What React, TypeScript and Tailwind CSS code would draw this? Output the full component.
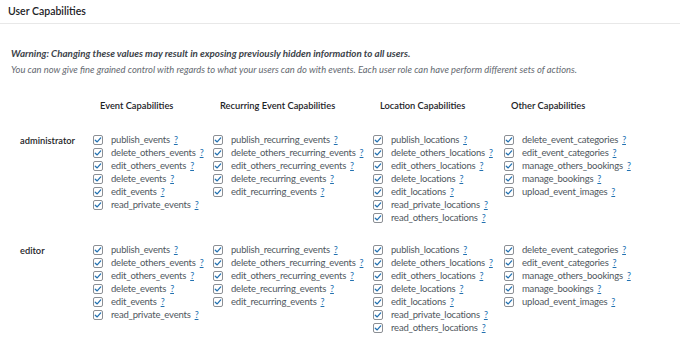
import React from "react";

const groups: { title: string; caps: string[] }[] = [
  {
    title: "Event Capabilities",
    caps: ["publish_events", "delete_others_events", "edit_others_events", "delete_events", "edit_events", "read_private_events"],
  },
  {
    title: "Recurring Event Capabilities",
    caps: [
      "publish_recurring_events",
      "delete_others_recurring_events",
      "edit_others_recurring_events",
      "delete_recurring_events",
      "edit_recurring_events",
    ],
  },
  {
    title: "Location Capabilities",
    caps: [
      "publish_locations",
      "delete_others_locations",
      "edit_others_locations",
      "delete_locations",
      "edit_locations",
      "read_private_locations",
      "read_others_locations",
    ],
  },
  {
    title: "Other Capabilities",
    caps: ["delete_event_categories", "edit_event_categories", "manage_others_bookings", "manage_bookings", "upload_event_images"],
  },
];

const roles = ["administrator", "editor"];

function Check() {
  return (
    <span className="flex h-[10px] w-[10px] shrink-0 items-center justify-center rounded-[2px] border border-[#8c8f94] bg-white">
      <svg viewBox="0 0 10 10" className="h-[8px] w-[8px]">
        <path d="M1.6 5.2 L4 7.4 L8.4 2.4" fill="none" stroke="#2271b1" strokeWidth="1.6" strokeLinecap="round" strokeLinejoin="round" />
      </svg>
    </span>
  );
}

function CapRow({ name }: { name: string }) {
  return (
    <div className="flex h-[13px] items-center gap-[8px]">
      <Check />
      <span className="whitespace-nowrap text-[9.5px] tracking-[-0.2px] text-[#50575e]">
        {name}
        <a className="ml-[4px] text-[9px] text-[#2271b1] underline">?</a>
      </span>
    </div>
  );
}

export default function App() {
  return (
    <div className="h-[344px] w-[680px] overflow-hidden bg-white text-[10px] text-[#1d2327]" style={{ fontFamily: "Lato, 'Noto Sans', sans-serif" }}>
      <div className="flex h-[24px] items-center border-b border-[#e8e8e8] pl-[8px] text-[10.5px] font-semibold text-[#1d2327]">
        User Capabilities
      </div>

      <div className="pl-[11px] pt-[22px] italic">
        <p className="text-[9.8px] font-bold text-[#3c434a]">Warning: Changing these values may result in exposing previously hidden information to all users.</p>
        <p className="mt-[2px] text-[9.4px] text-[#646970]">
          You can now give fine grained control with regards to what your users can do with events. Each user role can have perform different sets of actions.
        </p>
      </div>

      <div className="grid grid-cols-[93px_120px_160px_131px_1fr] pt-[22px]">
        <div />
        {groups.map((g) => (
          <div key={g.title} className="pl-[7px] text-[9.3px] font-semibold text-[#1d2327]">
            {g.title}
          </div>
        ))}

        {roles.map((role, i) => (
          <React.Fragment key={role}>
            <div className={`pl-[20px] text-[9.3px] font-semibold ${i === 0 ? "pt-[21px]" : "pt-[19px]"}`}>{role}</div>
            {groups.map((g) => (
              <div key={g.title} className={i === 0 ? "pt-[21px]" : "pt-[19px]"}>
                {g.caps.map((c) => (
                  <CapRow key={c} name={c} />
                ))}
              </div>
            ))}
          </React.Fragment>
        ))}
      </div>
    </div>
  );
}
